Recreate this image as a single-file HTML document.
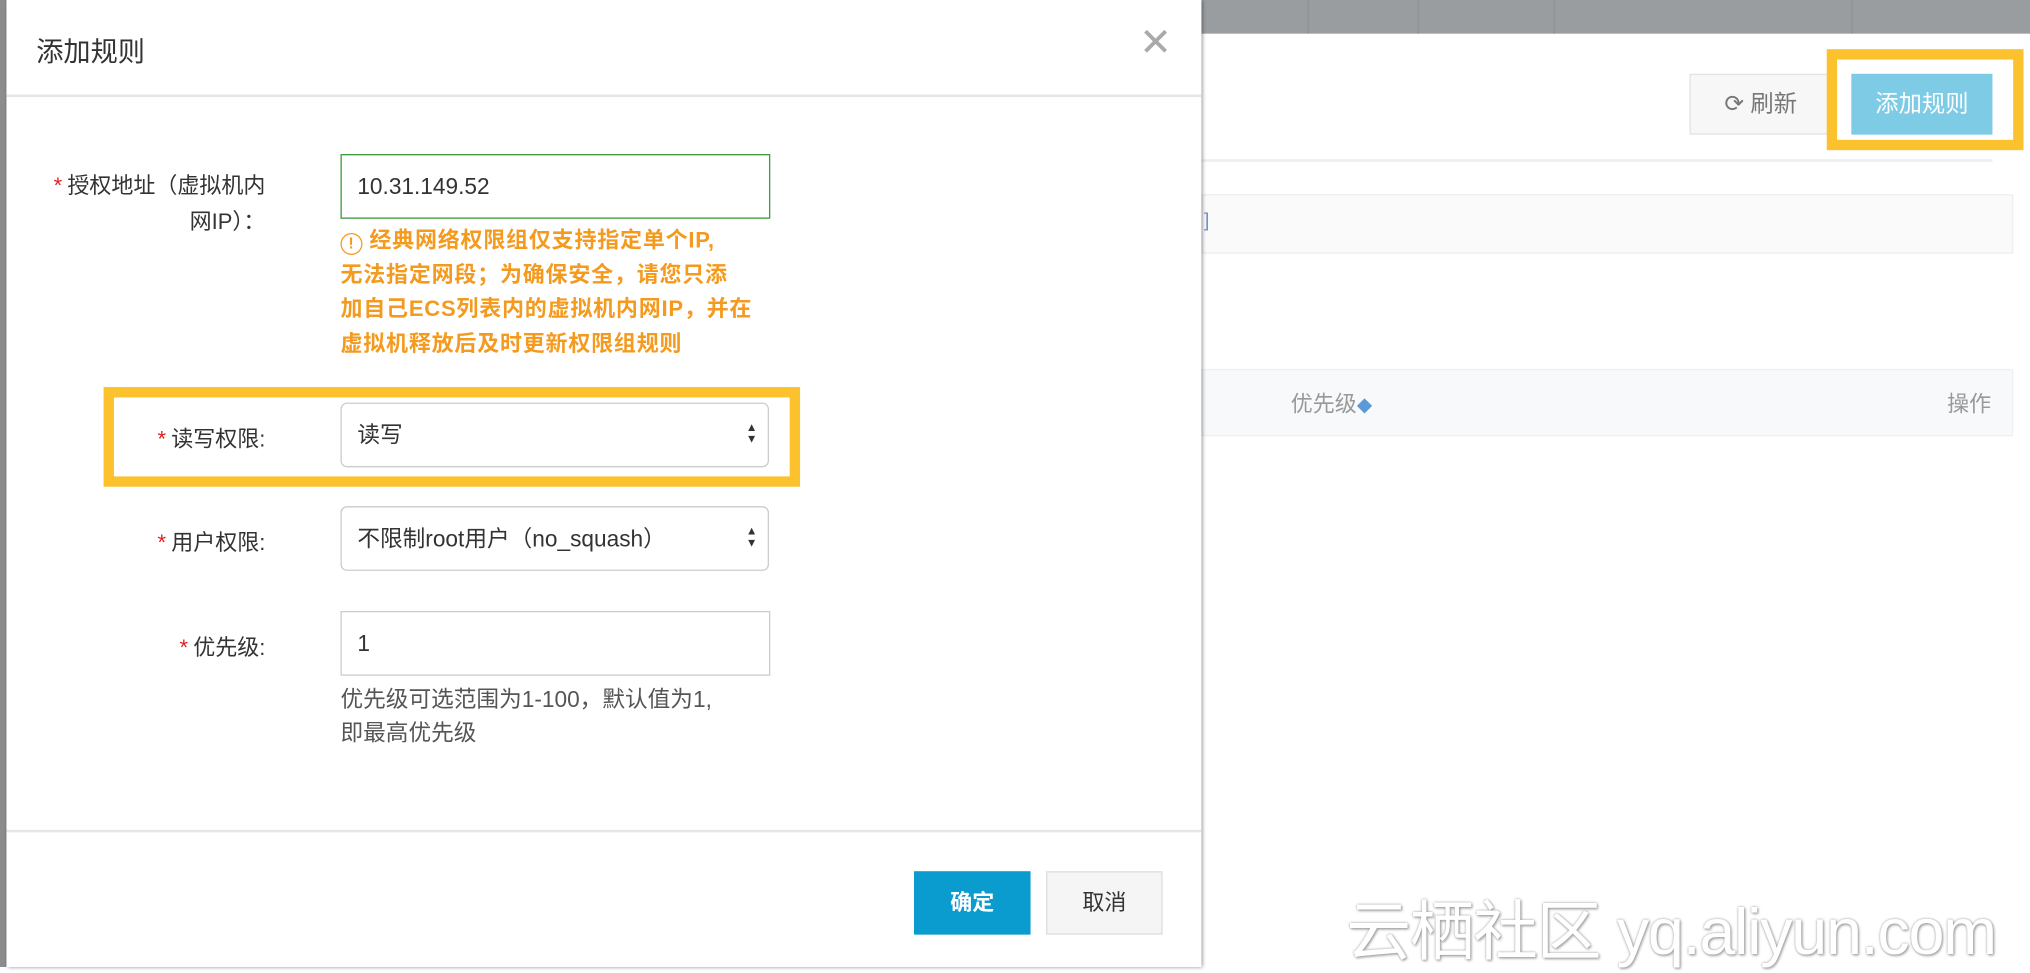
<!DOCTYPE html>
<html><head><meta charset="utf-8"><style>
html,body{margin:0;padding:0;width:2030px;height:967px;overflow:hidden;background:#fff}
#s{position:absolute;left:0;top:0;width:1568px;height:747px;transform:scale(1.29464,1.29451);transform-origin:0 0;font-family:"Liberation Sans","Noto Sans CJK SC",sans-serif;color:#333}
.a{position:absolute}
.lab{position:absolute;font-size:17px;color:#333;text-align:right;width:200px}
.lab b{color:#e02020;font-weight:normal;margin-right:4px}
.box{position:absolute;border:1px solid #ccc;background:#fff;box-sizing:border-box;font-size:17.5px;padding-left:12px}
.arr{position:absolute;right:8px;top:50%;margin-top:-10px;font-size:9px;line-height:9px;color:#333}
</style></head><body><div id="s">
<div class="a" style="left:928px;top:0;width:640px;height:26px;background:#9a9da0"></div>
<div class="a" style="left:1010px;top:0;width:1px;height:26px;background:#8e9194"></div>
<div class="a" style="left:1095px;top:0;width:1px;height:26px;background:#8e9194"></div>
<div class="a" style="left:1200px;top:0;width:1px;height:26px;background:#8e9194"></div>
<div class="a" style="left:1430px;top:0;width:1px;height:26px;background:#8e9194"></div>
<div class="a" style="left:1305px;top:57px;width:110px;height:47px;border:1px solid #e3e3e3;background:#f7f7f7;box-sizing:border-box;font-size:18px;color:#777;line-height:45px;text-align:center">⟳ 刷新</div>
<div class="a" style="left:1411px;top:38px;width:152px;height:78px;border:8px solid #fbc22d;box-sizing:border-box"></div>
<div class="a" style="left:1430px;top:57px;width:109px;height:47px;background:#7ecbe6;color:#fff;font-size:18px;line-height:47px;text-align:center">添加规则</div>
<div class="a" style="left:928px;top:123px;width:611px;height:2px;background:#eee"></div>
<div class="a" style="left:928px;top:150px;width:627px;height:46px;border:1px solid #eee;background:#fafafa;box-sizing:border-box"></div>
<div class="a" style="left:930px;top:162px;color:#6f8fcf;font-size:15px">]</div>
<div class="a" style="left:928px;top:285px;width:627px;height:52px;border:1px solid #eef0f2;background:#f7f9fb;box-sizing:border-box"></div>
<div class="a" style="left:997px;top:298px;font-size:17px;color:#999">优先级<span style="color:#5b9bd5;font-size:12px">◆</span></div>
<div class="a" style="left:1504px;top:298px;font-size:17px;color:#999">操作</div>
<div class="a" style="left:1040px;top:680px;font-size:50px;color:#fff;text-shadow:0 0 2px #999,1px 1px 2px #aaa;letter-spacing:-1px;white-space:nowrap">云栖社区 yq.aliyun.com</div>
<div class="a" style="left:0;top:0;width:5px;height:747px;background:#8a8c8e"></div>
<div class="a" style="left:5px;top:0;width:923px;height:747px;background:#fff;box-shadow:1px 0 3px rgba(0,0,0,.45)"></div>
<div class="a" style="left:28px;top:24px;font-size:21px;color:#333">添加规则</div>
<div class="a" style="left:880px;top:16px;font-size:30px;color:#aaa;font-weight:200">✕</div>
<div class="a" style="left:5px;top:73px;width:923px;height:2px;background:#e6e6e6"></div>

<div class="lab" style="left:5px;top:130px;line-height:28px"><b>*</b>授权地址（虚拟机内<br>网IP）：</div>
<div class="box" style="left:263px;top:119px;width:332px;height:50px;border-color:#3a9a3a;line-height:48px">10.31.149.52</div>
<div class="a" style="left:263px;top:173px;width:360px;font-size:17px;letter-spacing:0.6px;line-height:26.6px;color:#f39a1f;font-weight:bold;white-space:nowrap">
<span style="display:inline-block;width:15px;height:15px;border:1.5px solid #f39a1f;border-radius:50%;font-size:12px;line-height:15px;text-align:center;vertical-align:-1px">!</span> 经典网络权限组仅支持指定单个IP,<br>无法指定网段；为确保安全，请您只添<br>加自己ECS列表内的虚拟机内网IP，并在<br>虚拟机释放后及时更新权限组规则</div>

<div class="a" style="left:80px;top:299px;width:538px;height:77px;border:8px solid #fbc22d;box-sizing:border-box"></div>
<div class="lab" style="left:5px;top:325px"><b>*</b>读写权限:</div>
<div class="box" style="left:263px;top:311px;width:331px;height:50px;border-radius:5px;line-height:48px">读写<div class="arr">▲<br>▼</div></div>

<div class="lab" style="left:5px;top:405px"><b>*</b>用户权限:</div>
<div class="box" style="left:263px;top:391px;width:331px;height:50px;border-radius:5px;line-height:48px">不限制root用户（no_squash）<div class="arr">▲<br>▼</div></div>

<div class="lab" style="left:5px;top:486px"><b>*</b>优先级:</div>
<div class="box" style="left:263px;top:472px;width:332px;height:50px;line-height:48px">1</div>
<div class="a" style="left:263px;top:527px;font-size:17.5px;color:#555;line-height:26px;white-space:nowrap">优先级可选范围为1-100，默认值为1,<br>即最高优先级</div>

<div class="a" style="left:5px;top:641px;width:923px;height:2px;background:#e6e6e6"></div>
<div class="a" style="left:706px;top:673px;width:90px;height:49px;background:#0a9bcf;color:#fff;font-size:17px;font-weight:bold;line-height:49px;text-align:center">确定</div>
<div class="a" style="left:808px;top:673px;width:90px;height:49px;background:#f5f5f5;border:1px solid #ddd;box-sizing:border-box;color:#333;font-size:17px;line-height:47px;text-align:center">取消</div>
</div></body></html>
